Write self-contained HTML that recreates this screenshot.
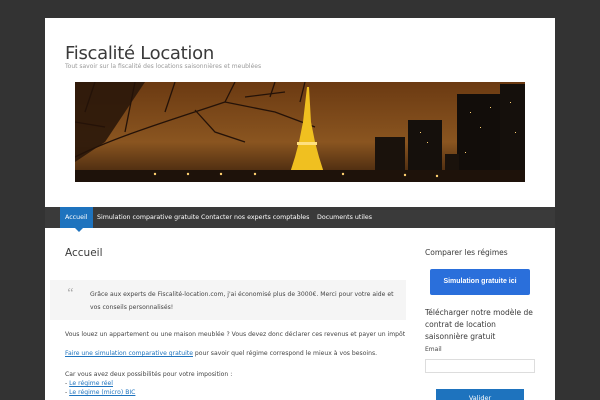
<!DOCTYPE html>
<html><head><meta charset="utf-8"><style>
*{margin:0;padding:0;box-sizing:border-box}
html,body{width:600px;height:400px;overflow:hidden}
body{background:#333;font-family:"DejaVu Sans","Liberation Sans",sans-serif;color:#444;position:relative}
.page{position:absolute;left:45px;top:18px;width:510px;height:382px;background:#fff;overflow:hidden}
.title{position:absolute;left:20px;top:25px;font-size:18px;color:#3a3a3a;letter-spacing:-0.3px}
.tag{position:absolute;left:20px;top:45px;font-size:6px;color:#999}
.hdr{position:absolute;left:30px;top:64px;width:450px;height:100px;overflow:hidden}
.nav{position:absolute;left:0;top:189px;width:510px;height:21px;background:#3a3a3a}
.nav span{position:absolute;top:0;height:21px;line-height:21px;font-size:6.3px;color:#fff;white-space:nowrap}
.act{background:#1e73be;padding:0 5px}
.arrow{position:absolute;left:30px;top:210px;border:4px solid transparent;border-top-color:#1e73be;border-bottom:0}
h1{position:absolute;left:20px;top:229px;font-size:10.5px;font-weight:normal;color:#3a3a3a}
.q{position:absolute;left:5px;top:262px;width:356px;height:40px;background:#f5f5f5}
.q i{position:absolute;left:16px;top:6px;font-size:14px;color:#aaa;font-family:"Liberation Serif",serif;font-style:italic}
.q p{position:absolute;left:40px;top:8px;font-size:6.1px;line-height:13px;color:#444;width:312px}
.txt{position:absolute;left:20px;font-size:6.1px;color:#444;white-space:nowrap}
a{color:#1e73be;text-decoration:underline}
.side{position:absolute;left:380px}
</style></head><body>
<div class="page">
<div class="title">Fiscalité Location</div>
<div class="tag">Tout savoir sur la fiscalité des locations saisonnières et meublées</div>
<div class="hdr">
<svg width="450" height="100" viewBox="0 0 450 100">
<defs><linearGradient id="g" x1="0" y1="0" x2="0" y2="1"><stop offset="0" stop-color="#6b3a12"/><stop offset="0.6" stop-color="#8a5520"/><stop offset="1" stop-color="#3a200c"/></linearGradient></defs>
<rect width="450" height="100" fill="url(#g)"/>
<path d="M0 0H70L50 30 30 60 0 80Z" fill="#2a170a" opacity="0.9"/>
<g stroke="#241208" stroke-width="1.3" fill="none">
<path d="M0 75C40 55 90 40 150 20L160 0M60 0L50 50M100 0L90 30M150 20L200 30 240 45M120 28L140 50 170 60M0 40L30 45M200 0L195 15M20 0L10 30M230 0L225 20M170 15L210 10"/>
</g>
<path d="M232 5L234 5L236 40L240 60L244 75L250 94L214 94L220 75L224 60L228 40Z" fill="#f0c020"/>
<rect x="222" y="60" width="20" height="3" fill="#ffe080"/>
<rect x="333" y="38" width="34" height="62" fill="#15100c"/>
<rect x="382" y="12" width="43" height="88" fill="#120d0a"/>
<rect x="425" y="2" width="25" height="98" fill="#15100c"/>
<rect x="300" y="55" width="30" height="45" fill="#1a120c"/>
<rect x="370" y="72" width="14" height="28" fill="#1a120c"/>
<rect x="0" y="88" width="450" height="12" fill="#1e120a"/>
<g fill="#ffd070"><circle cx="80" cy="92" r="1.2"/><circle cx="113" cy="92" r="1.2"/><circle cx="146" cy="92" r="1.2"/><circle cx="180" cy="92" r="1.2"/><circle cx="268" cy="92" r="1.2"/><circle cx="330" cy="93" r="1.2"/><circle cx="362" cy="94" r="1.2"/><rect x="345" y="50" width="1" height="1"/><rect x="352" y="60" width="1" height="1"/><rect x="395" y="30" width="1" height="1"/><rect x="405" y="45" width="1" height="1"/><rect x="415" y="25" width="1" height="1"/><rect x="435" y="20" width="1" height="1"/><rect x="440" y="50" width="1" height="1"/><rect x="390" y="70" width="1" height="1"/></g>
</svg></div>
<div class="nav">
<span class="act" style="left:15px">Accueil</span>
<span style="left:52px">Simulation comparative gratuite</span>
<span style="left:156px">Contacter nos experts comptables</span>
<span style="left:272px">Documents utiles</span>
</div>
<div class="arrow"></div>
<h1>Accueil</h1>
<div class="q"><i>“</i><p>Grâce aux experts de Fiscalité-location.com, j'ai économisé plus de 3000€. Merci pour votre aide et vos conseils personnalisés!</p></div>
<div class="txt" style="top:313px">Vous louez un appartement ou une maison meublée ? Vous devez donc déclarer ces revenus et payer un impôt</div>
<div class="txt" style="top:332px"><a>Faire une simulation comparative gratuite</a> pour savoir quel régime correspond le mieux à vos besoins.</div>
<div class="txt" style="top:352px;line-height:9px">Car vous avez deux possibilités pour votre imposition :<br>- <a>Le régime réel</a><br>- <a>Le régime (micro) BIC</a></div>
<div class="side" style="top:230px;font-size:7.5px;color:#3a3a3a">Comparer les régimes</div>
<div class="side" style="left:385px;top:251px;width:100px;height:26px;background:#2a6fdb;border-radius:2px;color:#fff;font-size:7px;font-weight:bold;text-align:center;line-height:26px;font-family:'Liberation Sans',sans-serif">Simulation gratuite ici</div>
<div class="side" style="top:289px;font-size:7.5px;line-height:12px;color:#3a3a3a;width:112px">Télécharger notre modèle de contrat de location saisonnière gratuit</div>
<div class="side" style="top:328px;font-size:6px;color:#444">Email</div>
<div class="side" style="top:341px;width:110px;height:14px;border:1px solid #ddd"></div>
<div class="side" style="left:391px;top:371px;width:88px;height:16px;background:#1e73be;color:#fff;font-size:6.5px;text-align:center;line-height:18px">Valider</div>
</div>
</body></html>
